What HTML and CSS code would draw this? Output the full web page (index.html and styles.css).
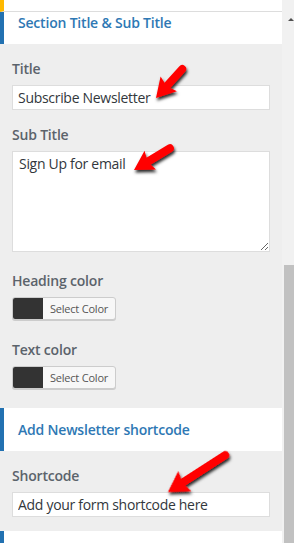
FILE: index.html
```html
<!DOCTYPE html>
<html lang="en">
<head>
    <meta charset="UTF-8">
    <meta name="viewport" content="width=device-width, initial-scale=1.0">
    <title>Newsletter section settings</title>
    <link rel="stylesheet" href="styles.css">
</head>
<body>
    <div class="frame">
        <div class="panel">
            <div class="prev-section"></div>
            <div class="section-head head-first">Section Title &amp; Sub Title</div>
            <div class="section-body body-first">
                <div class="field">
                    <label class="field-label">Title</label>
                    <input class="text-input" type="text" value="Subscribe Newsletter">
                </div>
                <div class="field field-area">
                    <label class="field-label">Sub Title</label>
                    <textarea class="text-area">Sign Up for email</textarea>
                </div>
                <div class="field field-color">
                    <label class="field-label">Heading color</label>
                    <button class="color-btn"><span class="swatch"></span><span class="color-text">Select Color</span></button>
                </div>
                <div class="field field-last">
                    <label class="field-label">Text color</label>
                    <button class="color-btn"><span class="swatch"></span><span class="color-text">Select Color</span></button>
                </div>
            </div>
            <div class="section-head">Add Newsletter shortcode</div>
            <div class="section-body body-second">
                <div class="field field-last">
                    <label class="field-label">Shortcode</label>
                    <input class="text-input" type="text" value="Add your form shortcode here">
                </div>
            </div>
            <div class="section-head head-last"></div>
        </div>
        <div class="scrollbar">
            <span class="scroll-arrow"></span>
            <div class="scroll-thumb"></div>
        </div>
    </div>

    <!-- annotation arrows drawn over the screenshot -->
    <svg class="arrows" width="294" height="543" viewBox="0 0 294 543">
        <defs>
            <filter id="shadow" x="-30%" y="-30%" width="160%" height="160%">
                <feDropShadow dx="1" dy="2.5" stdDeviation="1.4" flood-color="#000" flood-opacity="0.85"/>
            </filter>
        </defs>
        <g filter="url(#shadow)" fill="#f00">
            <g transform="translate(156 98) rotate(-47.9)">
                <line x1="14" y1="0" x2="39" y2="0" stroke="#f00" stroke-width="8" stroke-linecap="round"/>
                <polygon points="0,0 19,-11 16,0 19,11"/>
            </g>
            <g transform="translate(134 170) rotate(-31.2)">
                <line x1="14" y1="0" x2="42" y2="0" stroke="#f00" stroke-width="8" stroke-linecap="round"/>
                <polygon points="0,0 19,-11 16,0 19,11"/>
            </g>
            <g transform="translate(168 492) rotate(-32.8)">
                <line x1="14" y1="0" x2="68" y2="0" stroke="#f00" stroke-width="8" stroke-linecap="round"/>
                <polygon points="0,0 20,-12 17,0 20,12"/>
            </g>
        </g>
    </svg>
</body>
</html>
```

FILE: styles.css
```css
body {
    margin: 0;
    background-color: #eeeeee;
    font-family: "Open Sans", "Noto Sans", sans-serif;
    overflow: hidden;
}
.frame {
    display: flex;
    width: 294px;
    height: 543px;
}
.panel {
    width: 282px;
    height: 543px;
    background-color: #eeeeee;
    overflow: hidden;
}
.prev-section {
    height: 11px;
    background-color: #fff;
    border-left: 4px solid #ffb900;
    border-bottom: 1px solid #dddddd;
}
.section-head {
    height: 43px;
    box-sizing: border-box;
    background-color: #fff;
    border-left: 4px solid #2271b1;
    padding-left: 14px;
    line-height: 43px;
    font-size: 14px;
    font-weight: 600;
    color: #2e78b4;
    letter-spacing: -0.2px;
}
.head-first {
    height: 32px;
    line-height: 22px;
}
.head-last {
    height: 20px;
}
.section-body {
    padding: 16px 0 19px 12px;
}
.body-second {
    padding-bottom: 14px;
}
.field {
    margin-bottom: 16px;
}
.field-area {
    margin-bottom: 20px;
}
.field-color {
    margin-bottom: 21px;
}
.field-last {
    margin-bottom: 0;
}
.field-label {
    display: block;
    font-size: 14px;
    line-height: 18px;
    font-weight: 600;
    color: #5b636b;
    margin-bottom: 7px;
    letter-spacing: -0.2px;
}
.text-input, .text-area {
    display: block;
    box-sizing: border-box;
    width: 258px;
    border: 1px solid #dddddd;
    background-color: #fff;
    font-family: "Open Sans", "Noto Sans", sans-serif;
    font-size: 14px;
    color: #32373c;
    letter-spacing: -0.3px;
    margin: 0;
    outline: none;
}
.text-input {
    height: 25px;
    padding: 0 5px;
}
.text-area {
    height: 101px;
    padding: 2px 6px;
    line-height: 20px;
    resize: vertical;
}
.color-btn {
    display: flex;
    align-items: stretch;
    box-sizing: border-box;
    width: 104px;
    height: 23px;
    padding: 0;
    border: 1px solid #cccccc;
    border-radius: 3px;
    background-color: #f7f7f7;
    box-shadow: 0 1px 0 #cccccc;
    overflow: hidden;
}
.swatch {
    width: 30px;
    background-color: #333333;
}
.color-text {
    flex: 1;
    font-family: "Open Sans", "Noto Sans", sans-serif;
    font-size: 11px;
    line-height: 21px;
    color: #555555;
    text-align: center;
    letter-spacing: -0.2px;
}
.scrollbar {
    width: 12px;
    height: 543px;
    background-color: #f1f1f1;
    padding-left: 2px;
    box-sizing: border-box;
}
.scroll-arrow {
    display: block;
    width: 0;
    height: 0;
    margin: 18px 0 0 4px;
    border-left: 3px solid transparent;
    border-right: 3px solid transparent;
    border-bottom: 3px solid #505050;
}
.scroll-thumb {
    margin-top: 244px;
    height: 278px;
    background-color: #c1c1c1;
}
.arrows {
    position: absolute;
    left: 0;
    top: 0;
    pointer-events: none;
}
```
